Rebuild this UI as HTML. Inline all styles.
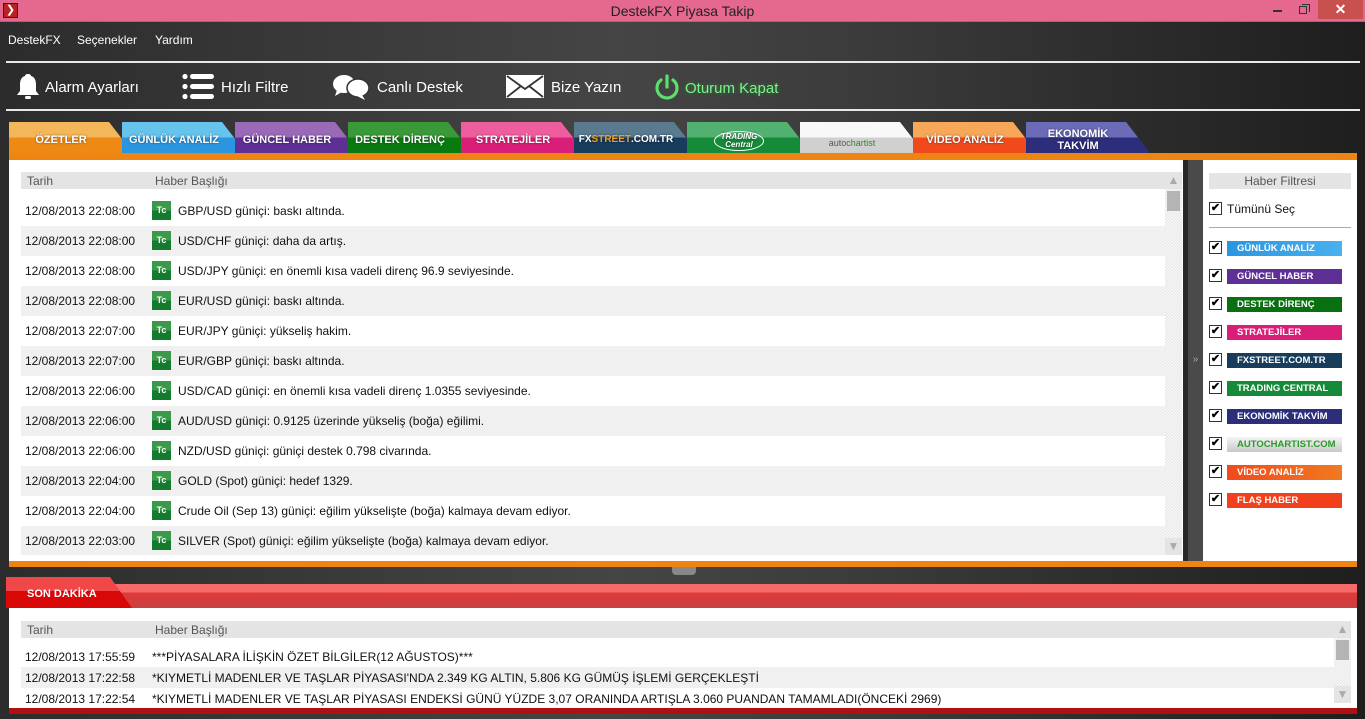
<!DOCTYPE html>
<html><head><meta charset="utf-8"><style>
*{margin:0;padding:0;box-sizing:border-box}
body{width:1365px;height:719px;overflow:hidden;position:relative;font-family:"Liberation Sans",Arial,sans-serif;background:linear-gradient(90deg,#2c2c2c 0%,#454545 45%,#3a3a3a 65%,#1e1e1e 100%)}
.abs{position:absolute}
.title{left:0;top:0;width:1365px;height:22px;background:#e5688f;border-bottom:1px solid #c85578}
.title .t{left:0;width:1365px;top:3px;text-align:center;font-size:14px;color:#222}
.menu{top:33px;font-size:12px;color:#fff}
.hl{left:6px;width:1354px;height:2px;background:#e8e8e8}
.tb{top:79px;font-size:15px;color:#fff;font-weight:normal}
.tab{top:122px;height:31px;width:124px;clip-path:polygon(0 0,100px 0,124px 100%,0 100%);color:#fff;font-size:11px;font-weight:bold;text-align:center;padding-top:12px;text-shadow:0 0 2px rgba(0,0,0,.5)}
.tab span{display:block;width:104px}
.panel{background:#fff}
.row{left:21px;width:1144px;height:30px;font-size:12px;color:#111}
.row .d{position:absolute;left:4px;top:8px}
.row .tc{position:absolute;left:131px;top:5px;width:19px;height:19px;background:linear-gradient(#3a9a4a 50%,#137a2e 50%);color:#fff;font-size:9px;text-align:center;line-height:19px;font-weight:bold}
.row .h{position:absolute;left:157px;top:8px}
.f{left:1209px;width:133px}
.cb{position:absolute;left:0;top:0;width:13px;height:13px;border:1px solid #333;background:#fff;font-size:11px;line-height:11px;text-align:center;color:#000;font-weight:bold}
.lbl{position:absolute;left:18px;top:0;width:115px;height:15px;color:#fff;font-size:9.5px;font-weight:bold;padding-left:10px;line-height:15px}
.r2{left:21px;width:1314px;height:21px;font-size:12px;color:#111}
.r2 .d{position:absolute;left:4px;top:4px}
.r2 .h{position:absolute;left:131px;top:4px}
</style></head><body>
<div class="abs title"><div class="abs" style="left:3px;top:3px;width:15px;height:15px;background:#b22;border:1px solid #700;color:#fff;font-size:11px;line-height:13px;text-align:center">❯</div><div class="abs t">DestekFX Piyasa Takip</div>
<div class="abs" style="left:1273px;top:10px;width:9px;height:2px;background:#333"></div>
<div class="abs" style="left:1299px;top:6px;width:8px;height:8px;border:1.5px solid #333"></div>
<div class="abs" style="left:1302px;top:4px;width:8px;height:8px;border-top:1.5px solid #333;border-right:1.5px solid #333"></div>
<div class="abs" style="left:1318px;top:0;width:45px;height:19px;background:#c8504e;color:#fff;text-align:center;font-size:14px;line-height:19px;font-weight:bold">✕</div></div>
<div class="abs menu" style="left:8px">DestekFX</div><div class="abs menu" style="left:77px">Seçenekler</div><div class="abs menu" style="left:155px">Yardım</div>
<div class="abs hl" style="top:61px"></div><div class="abs hl" style="top:109px"></div>
<svg class="abs" style="left:16px;top:73px" width="24" height="28" viewBox="0 0 24 28"><path d="M12 1c-2 0-3 1-3 2C5 4 4 8 4 12v6l-3 4h22l-3-4v-6c0-4-1-8-5-9 0-1-1-2-3-2z" fill="#fff"/><rect x="9" y="23" width="6" height="3" rx="1.5" fill="#fff"/></svg>
<div class="abs tb" style="left:45px">Alarm Ayarları</div>
<svg class="abs" style="left:182px;top:73px" width="32" height="27"><circle cx="3" cy="3.5" r="2.6" fill="#fff"/><circle cx="3" cy="13.5" r="2.6" fill="#fff"/><circle cx="3" cy="23.5" r="2.6" fill="#fff"/><rect x="8" y="1" width="24" height="5" rx="2.5" fill="#fff"/><rect x="8" y="11" width="24" height="5" rx="2.5" fill="#fff"/><rect x="8" y="21" width="24" height="5" rx="2.5" fill="#fff"/></svg>
<div class="abs tb" style="left:221px">Hızlı Filtre</div>
<svg class="abs" style="left:332px;top:74px" width="38" height="26"><ellipse cx="12" cy="10" rx="11" ry="9" fill="#fff"/><path d="M5 16l-2 6 7-4z" fill="#fff"/><ellipse cx="26" cy="14" rx="11" ry="9" fill="#fff" stroke="#333" stroke-width="1.5"/><path d="M30 21l3 5-8-4z" fill="#fff"/></svg>
<div class="abs tb" style="left:377px">Canlı Destek</div>
<svg class="abs" style="left:505px;top:74px" width="40" height="25"><rect x="1" y="1" width="38" height="23" fill="#fff"/><path d="M2 2l18 13 18-13M2 23l14-11M38 23l-14-11" stroke="#333" stroke-width="1.8" fill="none"/></svg>
<div class="abs tb" style="left:551px">Bize Yazın</div>
<svg class="abs" style="left:654px;top:74px" width="26" height="27"><path d="M7 6a10 10 0 1 0 12 0" stroke="#5ce06c" stroke-width="3.2" fill="none" stroke-linecap="round"/><line x1="13" y1="2" x2="13" y2="13" stroke="#5ce06c" stroke-width="3.2" stroke-linecap="round"/></svg>
<div class="abs tb" style="left:685px;color:#7ef08a;top:80px;text-shadow:0 0 4px #2a8a3a">Oturum Kapat</div>

<div class="abs tab" style="left:9px;background:linear-gradient(#f3b659 50%,#ee8a14 50%)"><span>ÖZETLER</span></div>
<div class="abs tab" style="left:122px;background:linear-gradient(#66c3ec 50%,#2a96e0 50%)"><span>GÜNLÜK ANALİZ</span></div>
<div class="abs tab" style="left:235px;background:linear-gradient(#9a6ab8 50%,#5e2f94 50%)"><span>GÜNCEL HABER</span></div>
<div class="abs tab" style="left:348px;background:linear-gradient(#3a9a3a 50%,#087a10 50%)"><span>DESTEK DİRENÇ</span></div>
<div class="abs tab" style="left:461px;background:linear-gradient(#ee5e9e 50%,#d91e78 50%)"><span>STRATEJİLER</span></div>
<div class="abs tab" style="left:574px;background:linear-gradient(#5a7a90 50%,#173c5c 50%);font-size:10px"><span>FX<b style="color:#f0a020">STREET</b>.COM.TR</span></div>
<div class="abs tab" style="left:687px;background:linear-gradient(#52b070 50%,#158a38 50%);padding-top:9px;font-size:8px;font-style:italic;line-height:8px"><span><span style="display:inline-block;border:1.5px solid #fff;border-radius:50%;padding:1px 6px;width:auto">TRADING<br>Central</span></span></div>
<div class="abs tab" style="left:800px;background:linear-gradient(#f8f8f8 50%,#d0d0d0 50%);color:#555;font-weight:normal;text-shadow:none;font-size:9px;padding-top:16px"><span>auto<b style="color:#2a8a2a;font-weight:normal">chartist</b></span></div>
<div class="abs tab" style="left:913px;background:linear-gradient(#f6a858 50%,#f04a1c 50%)"><span>VİDEO ANALİZ</span></div>
<div class="abs tab" style="left:1026px;background:linear-gradient(#6b6bb8 50%,#2c2e7c 50%);padding-top:6px"><span>EKONOMİK<br>TAKVİM</span></div>
<div class="abs" style="left:9px;top:153px;width:1348px;height:7px;background:#ee8412"></div>

<div class="abs panel" style="left:9px;top:160px;width:1174px;height:401px"></div>
<div class="abs" style="left:1188px;top:160px;width:15px;height:401px;background:#4a4a4a;color:#aaa;font-size:10px;text-align:center;padding-top:194px">»</div>
<div class="abs panel" style="left:1203px;top:160px;width:154px;height:401px"></div>
<div class="abs" style="left:21px;top:172px;width:1144px;height:17px;background:#e4e4e4;font-size:12px;color:#555"><span class="abs" style="left:6px;top:2px">Tarih</span><span class="abs" style="left:134px;top:2px">Haber Başlığı</span></div>
<div class="abs" style="left:1165px;top:172px;width:17px;height:383px;background:repeating-conic-gradient(#e6e6e6 0 25%,#fafafa 0 50%) 0 0/3px 3px"></div>
<div class="abs" style="left:1165px;top:172px;width:17px;height:17px;background:#e4e4e4;color:#aaa;font-size:12px;text-align:center;line-height:17px">▲</div>
<div class="abs" style="left:1167px;top:191px;width:13px;height:20px;background:#b4b4b4"></div>
<div class="abs" style="left:1165px;top:538px;width:17px;height:17px;background:#e4e4e4;color:#aaa;font-size:12px;text-align:center;line-height:17px">▼</div>

<div class="abs row" style="top:196px"><span class="d">12/08/2013 22:08:00</span><span class="tc">Tc</span><span class="h">GBP/USD güniçi: baskı altında.</span></div>
<div class="abs row" style="top:226px;background:#f0f0f0"><span class="d">12/08/2013 22:08:00</span><span class="tc">Tc</span><span class="h">USD/CHF güniçi: daha da artış.</span></div>
<div class="abs row" style="top:256px"><span class="d">12/08/2013 22:08:00</span><span class="tc">Tc</span><span class="h">USD/JPY güniçi: en önemli kısa vadeli direnç 96.9 seviyesinde.</span></div>
<div class="abs row" style="top:286px;background:#f0f0f0"><span class="d">12/08/2013 22:08:00</span><span class="tc">Tc</span><span class="h">EUR/USD güniçi: baskı altında.</span></div>
<div class="abs row" style="top:316px"><span class="d">12/08/2013 22:07:00</span><span class="tc">Tc</span><span class="h">EUR/JPY güniçi: yükseliş hakim.</span></div>
<div class="abs row" style="top:346px;background:#f0f0f0"><span class="d">12/08/2013 22:07:00</span><span class="tc">Tc</span><span class="h">EUR/GBP güniçi: baskı altında.</span></div>
<div class="abs row" style="top:376px"><span class="d">12/08/2013 22:06:00</span><span class="tc">Tc</span><span class="h">USD/CAD güniçi: en önemli kısa vadeli direnç 1.0355 seviyesinde.</span></div>
<div class="abs row" style="top:406px;background:#f0f0f0"><span class="d">12/08/2013 22:06:00</span><span class="tc">Tc</span><span class="h">AUD/USD güniçi: 0.9125 üzerinde yükseliş (boğa) eğilimi.</span></div>
<div class="abs row" style="top:436px"><span class="d">12/08/2013 22:06:00</span><span class="tc">Tc</span><span class="h">NZD/USD güniçi: güniçi destek 0.798 civarında.</span></div>
<div class="abs row" style="top:466px;background:#f0f0f0"><span class="d">12/08/2013 22:04:00</span><span class="tc">Tc</span><span class="h">GOLD (Spot) güniçi: hedef 1329.</span></div>
<div class="abs row" style="top:496px"><span class="d">12/08/2013 22:04:00</span><span class="tc">Tc</span><span class="h">Crude Oil (Sep 13) güniçi: eğilim yükselişte (boğa) kalmaya devam ediyor.</span></div>
<div class="abs row" style="top:526px;background:#f0f0f0;height:29px"><span class="d">12/08/2013 22:03:00</span><span class="tc">Tc</span><span class="h">SILVER (Spot) güniçi: eğilim yükselişte (boğa) kalmaya devam ediyor.</span></div>

<div class="abs" style="left:1209px;top:173px;width:142px;height:16px;background:#e4e4e4;color:#555;font-size:12px;text-align:center;line-height:16px">Haber Filtresi</div>
<div class="abs f" style="top:202px"><span class="cb">✔</span><span class="abs" style="left:18px;top:0;font-size:12px;color:#111">Tümünü Seç</span></div>
<div class="abs" style="left:1209px;top:227px;width:142px;height:1px;background:#aaa"></div>
<div class="abs f" style="top:241px"><span class="cb">✔</span><span class="lbl" style="background:linear-gradient(90deg,#2a96e0,#4ab0ee)">GÜNLÜK ANALİZ</span></div>
<div class="abs f" style="top:269px"><span class="cb">✔</span><span class="lbl" style="background:#5e2f94">GÜNCEL HABER</span></div>
<div class="abs f" style="top:297px"><span class="cb">✔</span><span class="lbl" style="background:#087010">DESTEK DİRENÇ</span></div>
<div class="abs f" style="top:325px"><span class="cb">✔</span><span class="lbl" style="background:#d91e78">STRATEJİLER</span></div>
<div class="abs f" style="top:353px"><span class="cb">✔</span><span class="lbl" style="background:#173c5c">FXSTREET.COM.TR</span></div>
<div class="abs f" style="top:381px"><span class="cb">✔</span><span class="lbl" style="background:#158a38">TRADING CENTRAL</span></div>
<div class="abs f" style="top:409px"><span class="cb">✔</span><span class="lbl" style="background:#2c2e7c">EKONOMİK TAKVİM</span></div>
<div class="abs f" style="top:437px"><span class="cb">✔</span><span class="lbl" style="background:linear-gradient(#f4f4f4,#c8c8c8);color:#2a9a2a">AUTOCHARTIST.COM</span></div>
<div class="abs f" style="top:465px"><span class="cb">✔</span><span class="lbl" style="background:linear-gradient(90deg,#f04a1c,#f07a20)">VİDEO ANALİZ</span></div>
<div class="abs f" style="top:493px"><span class="cb">✔</span><span class="lbl" style="background:#f0401c">FLAŞ HABER</span></div>

<div class="abs" style="left:9px;top:561px;width:1348px;height:6px;background:#ee8412"></div>
<div class="abs" style="left:672px;top:567px;width:24px;height:8px;background:#888;border-radius:0 0 4px 4px"></div>
<div class="abs" style="left:9px;top:584px;width:1348px;height:24px;background:linear-gradient(#f86a6a 35%,#e03a3a 35%,#c84040)"></div>
<div class="abs" style="left:6px;top:577px;width:126px;height:31px;clip-path:polygon(0 0,104px 0,126px 100%,0 100%);background:linear-gradient(#f04848 45%,#d80808 45%);color:#fff;font-size:11px;font-weight:bold;padding:11px 0 0 21px">SON DAKİKA</div>
<div class="abs panel" style="left:9px;top:608px;width:1348px;height:100px"></div>
<div class="abs" style="left:21px;top:621px;width:1314px;height:17px;background:#e4e4e4;font-size:12px;color:#555"><span class="abs" style="left:6px;top:2px">Tarih</span><span class="abs" style="left:134px;top:2px">Haber Başlığı</span></div>
<div class="abs" style="left:1334px;top:621px;width:17px;height:82px;background:repeating-conic-gradient(#e6e6e6 0 25%,#fafafa 0 50%) 0 0/3px 3px"></div>
<div class="abs" style="left:1334px;top:621px;width:17px;height:17px;background:#e4e4e4;color:#aaa;font-size:12px;text-align:center;line-height:17px">▲</div>
<div class="abs" style="left:1336px;top:640px;width:13px;height:20px;background:#b4b4b4"></div>
<div class="abs" style="left:1334px;top:686px;width:17px;height:17px;background:#e4e4e4;color:#aaa;font-size:12px;text-align:center;line-height:17px">▼</div>
<div class="abs r2" style="top:646px"><span class="d">12/08/2013 17:55:59</span><span class="h">***PİYASALARA İLİŞKİN ÖZET BİLGİLER(12 AĞUSTOS)***</span></div>
<div class="abs r2" style="top:667px;background:#f0f0f0"><span class="d">12/08/2013 17:22:58</span><span class="h">*KIYMETLİ MADENLER VE TAŞLAR PİYASASI'NDA 2.349 KG ALTIN, 5.806 KG GÜMÜŞ İŞLEMİ GERÇEKLEŞTİ</span></div>
<div class="abs r2" style="top:688px;height:20px;overflow:hidden"><span class="d">12/08/2013 17:22:54</span><span class="h">*KIYMETLİ MADENLER VE TAŞLAR PİYASASI ENDEKSİ GÜNÜ YÜZDE 3,07 ORANINDA ARTIŞLA 3.060 PUANDAN TAMAMLADI(ÖNCEKİ 2969)</span></div>
<div class="abs" style="left:9px;top:708px;width:1348px;height:6px;background:#b01010"></div>
</body></html>
